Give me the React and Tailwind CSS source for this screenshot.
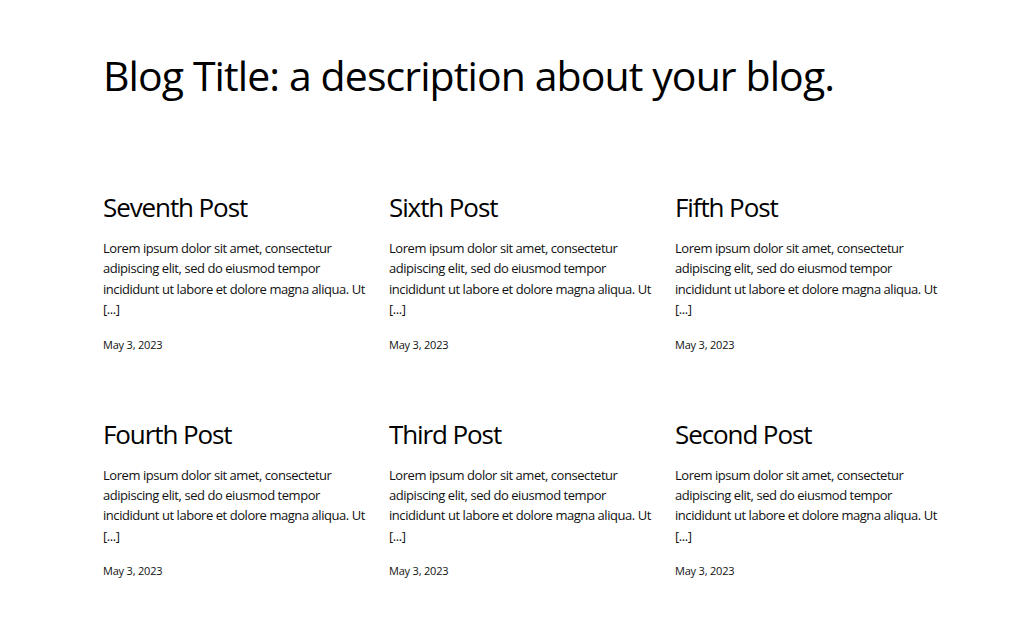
import React from "react";

const posts = ["Seventh Post", "Sixth Post", "Fifth Post", "Fourth Post", "Third Post", "Second Post"];

function Post({ title }) {
  return (
    <div className="flex flex-col">
      <h2 className="text-[26px] leading-[34px] tracking-[-1.1px] text-black">{title}</h2>
      <p className="mt-[14px] whitespace-nowrap text-[13px] leading-[20.4px] tracking-[-0.45px] text-[#111]">
        Lorem ipsum dolor sit amet, consectetur
        <br />
        adipiscing elit, sed do eiusmod tempor
        <br />
        incididunt ut labore et dolore magna aliqua. Ut
        <br />
        [...]
      </p>
      <div className="mt-[17px] text-[11px] leading-[16px] tracking-[-0.2px] text-[#111]">May 3, 2023</div>
    </div>
  );
}

export default function App() {
  return (
    <div className="min-h-[643px] bg-white pl-[103px] pt-[47px]" style={{ fontFamily: '"Open Sans", "Noto Sans", sans-serif' }}>
      <h1 className="text-[41px] leading-[56px] tracking-[-0.9px] text-black">Blog Title: a description about your blog.</h1>
      <div className="mt-[87px] grid grid-cols-[262px_262px_262px] gap-x-[24px] gap-y-[64px]">
        {posts.map((p) => (
          <Post key={p} title={p} />
        ))}
      </div>
    </div>
  );
}
